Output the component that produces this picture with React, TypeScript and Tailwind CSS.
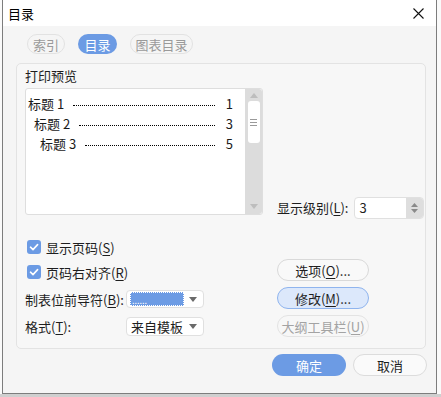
import React from 'react'

const font = { fontFamily: '"Noto Sans CJK SC", "Liberation Sans", sans-serif' }

function Check() {
    return (
        <div className="w-[14px] h-[14px] rounded-[3px] bg-[#6c9be4] flex items-center justify-center">
            <svg width="10" height="10" viewBox="0 0 10 10">
                <path d="M1.5 5.2 L4 7.6 L8.6 2.6" fill="none" stroke="#fff" strokeWidth="1.6" strokeLinecap="round" strokeLinejoin="round" />
            </svg>
        </div>
    )
}

function Arrow() {
    return (
        <svg width="8" height="5" viewBox="0 0 8 5">
            <path d="M0 0 L8 0 L4 5 Z" fill="#6a6a6a" />
        </svg>
    )
}

function TocRow({ label, page, indent }: { label: string; page: string; indent: string }) {
    return (
        <div className={`flex items-center h-[20px] ${indent}`}>
            <span className="whitespace-nowrap">{label}</span>
            <div className="flex-1 ml-[9px] mr-[10px] border-b border-dotted border-[#000] translate-y-[1px]"></div>
            <span className="w-[8px] text-right">{page}</span>
        </div>
    )
}

export default function App() {
    const tocRows = [
        { label: '标题 1', page: '1', indent: 'pl-[0px]' },
        { label: '标题 2', page: '3', indent: 'pl-[6px]' },
        { label: '标题 3', page: '5', indent: 'pl-[12px]' },
    ]

    return (
        <div className="w-[441px] h-[397px] bg-[#fafafa] overflow-hidden text-[13px] text-[#1e1e1e] flex flex-col" style={font}>
            <div className="ml-[2px] w-[435px] h-[394px] bg-[#f5f5f5] border-l border-r border-b border-[#7d7d7d] flex flex-col">
                {/* title bar */}
                <div className="h-[26px] bg-white flex items-center justify-between pl-[5px] pr-[12px]">
                    <span className="text-[13px] leading-none text-black">目录</span>
                    <svg width="11" height="11" viewBox="0 0 11 11">
                        <path d="M0.5 0.5 L10.5 10.5 M10.5 0.5 L0.5 10.5" stroke="#111" strokeWidth="1.1" />
                    </svg>
                </div>

                {/* tabs */}
                <div className="flex gap-[13px] pl-[24px] pt-[8px]">
                    <div className="h-[20px] w-[38px] rounded-full border border-[#e2e2e2] text-[#9a9a9a] flex items-center justify-center leading-none">索引</div>
                    <div className="h-[20px] w-[39px] rounded-full bg-[#6c9be4] text-white flex items-center justify-center leading-none">目录</div>
                    <div className="h-[20px] w-[63px] rounded-full border border-[#e2e2e2] text-[#9a9a9a] flex items-center justify-center leading-none">图表目录</div>
                </div>

                {/* group box */}
                <div className="ml-[13px] mt-[9px] w-[410px] h-[286px] rounded-[5px] border border-[#e3e3e3] bg-[#f7f7f7] pl-[8px] pt-[5px]">
                    <div className="h-[14px] leading-[14px]">打印预览</div>

                    <div className="flex items-end mt-[5px]">
                        <div className="w-[238px] h-[127px] mb-[4px] bg-white border border-[#dedede] rounded-[3px] flex">
                            <div className="flex-1 pl-[2px] pr-[12px] pt-[5px] text-[13px] text-[#1a1a1a]">
                                {tocRows.map((r) => (
                                    <TocRow key={r.label} label={r.label} page={r.page} indent={r.indent} />
                                ))}
                            </div>
                            <div className="w-[17px] h-full bg-[#dcdcdc] rounded-r-[3px] flex flex-col items-center">
                                <svg width="8" height="5" viewBox="0 0 8 5" className="mt-[4px]">
                                    <path d="M0 5 L8 5 L4 0 Z" fill="#bdbdbd" />
                                </svg>
                                <div className="mt-[3px] w-[12px] h-[42px] bg-white rounded-[3px] flex items-center justify-center">
                                    <svg width="7" height="7" viewBox="0 0 7 7">
                                        <path d="M0 0.5 H7 M0 3.5 H7 M0 6.5 H7" stroke="#9a9a9a" strokeWidth="1" />
                                    </svg>
                                </div>
                                <div className="flex-1"></div>
                                <svg width="8" height="5" viewBox="0 0 8 5" className="mb-[5px]">
                                    <path d="M0 0 L8 0 L4 5 Z" fill="#bdbdbd" />
                                </svg>
                            </div>
                        </div>

                        <div className="ml-[14px] flex items-center">
                            <span className="whitespace-nowrap">显示级别(<u className="underline-offset-2">L</u>):</span>
                            <div className="ml-[6px] w-[70px] h-[22px] rounded-[4px] border border-[#e0e0e0] bg-white flex overflow-hidden">
                                <div className="flex-1 pl-[4px] flex items-center">3</div>
                                <div className="w-[17px] bg-[#dedede] flex flex-col items-center justify-center gap-[2px]">
                                    <svg width="7" height="4" viewBox="0 0 7 4"><path d="M0 4 L7 4 L3.5 0 Z" fill="#8a8a8a" /></svg>
                                    <svg width="7" height="4" viewBox="0 0 7 4"><path d="M0 0 L7 0 L3.5 4 Z" fill="#8a8a8a" /></svg>
                                </div>
                            </div>
                        </div>
                    </div>

                    <div className="flex">
                        {/* left column */}
                        <div className="w-[252px] flex flex-col">
                            <div className="mt-[21px] flex items-center gap-[5px] h-[14px]">
                                <div className="ml-[2px]"><Check /></div>
                                <span className="leading-none">显示页码(<u className="underline-offset-2">S</u>)</span>
                            </div>
                            <div className="mt-[11px] flex items-center gap-[5px] h-[14px]">
                                <div className="ml-[2px]"><Check /></div>
                                <span className="leading-none">页码右对齐(<u className="underline-offset-2">R</u>)</span>
                            </div>
                            <div className="mt-[11px] flex items-center h-[18px]">
                                <span className="w-[101px] leading-none whitespace-nowrap">制表位前导符(<u className="underline-offset-2">B</u>):</span>
                                <div className="w-[78px] h-[18px] bg-white border border-[#e0e0e0] rounded-[4px] flex items-center pl-[3px] pr-[6px]">
                                    <div className="w-[54px] h-[14px] bg-[#6c9be4] border border-dotted border-white flex items-end pl-[1px]">
                                        <span className="text-white text-[9px] leading-[9px]">......</span>
                                    </div>
                                    <div className="flex-1"></div>
                                    <Arrow />
                                </div>
                            </div>
                            <div className="mt-[9px] flex items-center h-[19px]">
                                <span className="w-[101px] leading-none">格式(<u className="underline-offset-2">T</u>):</span>
                                <div className="w-[78px] h-[19px] bg-white border border-[#e0e0e0] rounded-[4px] flex items-center pl-[4px] pr-[6px]">
                                    <span className="leading-none">来自模板</span>
                                    <div className="flex-1"></div>
                                    <Arrow />
                                </div>
                            </div>
                        </div>

                        {/* right column */}
                        <div className="flex flex-col gap-[6px] mt-[40px]">
                            <div className="w-[92px] h-[22px] rounded-full border border-[#d9d9d9] bg-[#f9f9f9] flex items-center justify-center leading-none">选项(<u className="underline-offset-2">O</u>)...</div>
                            <div className="w-[92px] h-[22px] rounded-full border border-[#8fb4ee] bg-[#dce8fb] flex items-center justify-center leading-none">修改(<u className="underline-offset-2">M</u>)...</div>
                            <div className="w-[92px] h-[22px] rounded-full border border-[#e3e3e3] bg-[#f7f7f7] text-[#a3a3a3] flex items-center justify-center leading-none">大纲工具栏(<u className="underline-offset-2">U</u>)</div>
                        </div>
                    </div>
                </div>

                {/* footer */}
                <div className="flex justify-end gap-[7px] pr-[9px] mt-[5px]">
                    <div className="w-[74px] h-[22px] rounded-full bg-[#6c9be4] text-white flex items-center justify-center leading-none">确定</div>
                    <div className="w-[74px] h-[22px] rounded-full border border-[#dcdcdc] bg-[#fafafa] flex items-center justify-center leading-none">取消</div>
                </div>
            </div>
            <div className="flex-1 bg-[#cfcfcf]"></div>
        </div>
    )
}
